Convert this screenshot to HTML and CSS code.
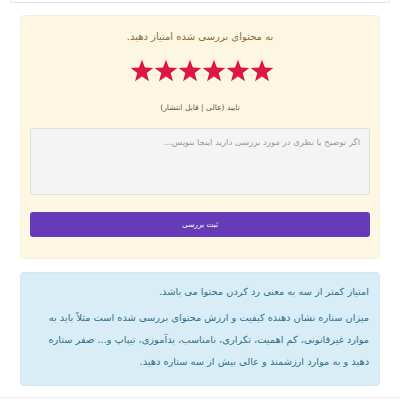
FILE: index.html
```html
<!DOCTYPE html>
<html lang="fa" dir="rtl">

<head>
    <meta charset="UTF-8">
    <meta name="viewport" content="width=device-width, initial-scale=1.0">
    <title>امتیاز بررسی</title>
    <link rel="stylesheet" href="styles.css">
</head>

<body>

    <!-- انتهای کارت قبلی -->
    <div class="prev-card"></div>

    <div class="page">

        <!-- فرم امتیاز -->
        <form class="rate-box">
            <p class="rate-title">به محتوای بررسی شده امتیاز دهید.</p>

            <div class="stars">
                <svg class="star" viewBox="0 0 24 24"><polygon points="12,0.8 14.9,8.6 23.3,8.9 16.7,14.1 19,22.3 12,17.6 5,22.3 7.3,14.1 0.7,8.9 9.1,8.6"/></svg>
                <svg class="star" viewBox="0 0 24 24"><polygon points="12,0.8 14.9,8.6 23.3,8.9 16.7,14.1 19,22.3 12,17.6 5,22.3 7.3,14.1 0.7,8.9 9.1,8.6"/></svg>
                <svg class="star" viewBox="0 0 24 24"><polygon points="12,0.8 14.9,8.6 23.3,8.9 16.7,14.1 19,22.3 12,17.6 5,22.3 7.3,14.1 0.7,8.9 9.1,8.6"/></svg>
                <svg class="star" viewBox="0 0 24 24"><polygon points="12,0.8 14.9,8.6 23.3,8.9 16.7,14.1 19,22.3 12,17.6 5,22.3 7.3,14.1 0.7,8.9 9.1,8.6"/></svg>
                <svg class="star" viewBox="0 0 24 24"><polygon points="12,0.8 14.9,8.6 23.3,8.9 16.7,14.1 19,22.3 12,17.6 5,22.3 7.3,14.1 0.7,8.9 9.1,8.6"/></svg>
                <svg class="star" viewBox="0 0 24 24"><polygon points="12,0.8 14.9,8.6 23.3,8.9 16.7,14.1 19,22.3 12,17.6 5,22.3 7.3,14.1 0.7,8.9 9.1,8.6"/></svg>
            </div>

            <p class="rate-label">تایید (عالی | قابل انتشار)</p>

            <textarea class="comment" placeholder="اگر توضیح یا نظری در مورد بررسی دارید اینجا بنویس..."></textarea>

            <button type="submit" class="submit">ثبت بررسی</button>
        </form>

        <!-- راهنما -->
        <div class="info-box">
            <p>امتیاز کمتر از سه به معنی رد کردن محتوا می باشد.</p>
            <p>میزان ستاره نشان دهنده کیفیت و ارزش محتوای بررسی شده است مثلاً باید به موارد غیرقانونی، کم اهمیت، تکراری، نامناسب، بدآموزی، تیپاپ و... صفر ستاره دهید و به موارد ارزشمند و عالی بیش از سه ستاره دهید.</p>
        </div>

    </div>

    <div class="footer-line"></div>

</body>

</html>
```

FILE: styles.css
```css
body {
    margin: 0;
    background-color: #ffffff;
    font-family: "DejaVu Sans", sans-serif;
    direction: rtl;
}

.prev-card {
    height: 2px;
    margin: 0 10px;
    border: 1px solid #e4e4e4;
    border-top: none;
    border-radius: 0 0 4px 4px;
}

.page {
    padding: 12px 20px 0;
}

.rate-box {
    display: flex;
    flex-direction: column;
    align-items: center;
    background-color: #fcf6e3;
    border: 1px solid #f8efd6;
    border-radius: 4px;
    padding: 11px 9px 21px;
    margin: 0;
}

.rate-title {
    margin: 0;
    line-height: 20px;
    font-size: 10px;
    color: #8a6d3b;
}

.stars {
    display: flex;
    direction: ltr;
    margin-top: 12px;
    margin-left: 3px;
}

.star {
    width: 24px;
    height: 24px;
    fill: #dc1840;
}

.rate-label {
    margin: 17px 0 0;
    line-height: 16px;
    font-size: 7.6px;
    color: #6b5a3a;
}

.comment {
    box-sizing: border-box;
    width: 100%;
    height: 67px;
    margin-top: 12px;
    padding: 8px 9px;
    background-color: #f4f4f4;
    border: 1px solid #e0e0dc;
    border-radius: 3px;
    font-family: "DejaVu Sans", sans-serif;
    font-size: 8.5px;
    resize: none;
}

.comment::placeholder {
    color: #9a9a9a;
}

.submit {
    width: 100%;
    height: 25px;
    margin-top: 17px;
    background-color: #673ab7;
    color: #ffffff;
    border: none;
    border-radius: 3px;
    font-family: "DejaVu Sans", sans-serif;
    font-size: 7.4px;
}

.info-box {
    margin-top: 13px;
    background-color: #d9edf7;
    border: 1px solid #d2e8f3;
    border-radius: 4px;
    padding: 8px 10px 12px;
    color: #31708f;
    font-size: 9.8px;
    line-height: 22px;
}

.info-box p {
    margin: 0;
}

.info-box p + p {
    margin-top: 4px;
}

.footer-line {
    margin-top: 11px;
    border-top: 1px solid #eeeeee;
    height: 4px;
    background-color: #fafafa;
}
```
